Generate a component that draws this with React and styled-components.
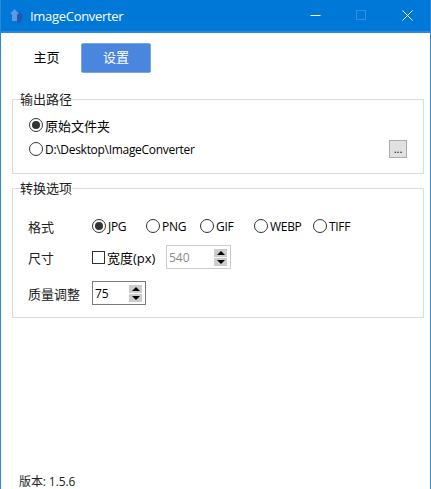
import styled, { createGlobalStyle } from "styled-components";

const GlobalStyle = createGlobalStyle`
  html, body {
    margin: 0;
    padding: 0;
    background: #fff;
  }
  body {
    font-family: "Open Sans", "Noto Sans CJK SC", sans-serif;
    font-size: 12px;
    color: #000;
  }
`;

const AppIcon = () => (
  <svg width="16" height="16" viewBox="0 0 16 16">
    <path d="M5.5 1 L10 6 H8 V13 H3 V6 H1 Z" fill="#5a9be6" />
    <path d="M9.5 2.5 L14 7 L12.6 7.8 L14 9.5 L12.6 11 L13 13 L10.5 15 L8 14.6 V6.5 H10 Z" fill="#2a55ab" />
  </svg>
);

const App = () => {
  return (
    <Window>
      <GlobalStyle />
      <TitleBar>
        <AppIcon />
        <Title>ImageConverter</Title>
        <Controls>
          <Control>
            <svg width="11" height="11" viewBox="0 0 11 11">
              <path d="M0.5 5.5 H10.5" stroke="#fff" strokeWidth="1" />
            </svg>
          </Control>
          <Control>
            <svg width="11" height="11" viewBox="0 0 11 11">
              <rect x="0.5" y="0.5" width="9" height="9" fill="none" stroke="#3391e3" strokeWidth="1" />
            </svg>
          </Control>
          <Control>
            <svg width="11" height="11" viewBox="0 0 11 11">
              <path d="M0.5 0.5 L10.5 10.5 M10.5 0.5 L0.5 10.5" stroke="#fff" strokeWidth="1" />
            </svg>
          </Control>
        </Controls>
      </TitleBar>
      <Content>
        <Tabs>
          <Tab>主页</Tab>
          <Tab $active>设置</Tab>
        </Tabs>
        <Group $height={82}>
          <Legend>输出路径</Legend>
          <PathRow>
            <Radio $checked />
            <OptionText $cjk>原始文件夹</OptionText>
          </PathRow>
          <PathRow>
            <Radio />
            <OptionText>D:\Desktop\ImageConverter</OptionText>
            <BrowseButton>...</BrowseButton>
          </PathRow>
        </Group>
        <Group $height={137} $top={7}>
          <Legend>转换选项</Legend>
          <FormatRow>
            <RowLabel>格式</RowLabel>
            <Option $width={54}>
              <Radio $checked />
              <OptionText>JPG</OptionText>
            </Option>
            <Option $width={54}>
              <Radio />
              <OptionText>PNG</OptionText>
            </Option>
            <Option $width={54}>
              <Radio />
              <OptionText>GIF</OptionText>
            </Option>
            <Option $width={59}>
              <Radio />
              <OptionText>WEBP</OptionText>
            </Option>
            <Option $width={54}>
              <Radio />
              <OptionText>TIFF</OptionText>
            </Option>
          </FormatRow>
          <SizeRow>
            <RowLabel>尺寸</RowLabel>
            <Option $width={74}>
              <Checkbox />
              <OptionText $cjk>宽度(px)</OptionText>
            </Option>
            <Spin $width={65} $disabled>
              <SpinValue $disabled>540</SpinValue>
              <SpinButtons>
                <SpinButton $up />
                <SpinButton />
              </SpinButtons>
            </Spin>
          </SizeRow>
          <QualityRow>
            <RowLabel>质量调整</RowLabel>
            <Spin $width={54}>
              <SpinValue>75</SpinValue>
              <SpinButtons>
                <SpinButton $up />
                <SpinButton />
              </SpinButtons>
            </Spin>
          </QualityRow>
        </Group>
      </Content>
      <Footer>版本: 1.5.6</Footer>
    </Window>
  );
};

const Window = styled.div`
  width: 431px;
  height: 489px;
  box-sizing: border-box;
  border-left: 1px solid #2b88d8;
  border-right: 1px solid #2b88d8;
  display: flex;
  flex-direction: column;
  overflow: hidden;
  background: #fff;
`;

const TitleBar = styled.div`
  height: 33px;
  flex: none;
  margin: 0 -1px;
  padding: 0 1px 0 9px;
  box-sizing: border-box;
  background: #0078d7;
  border-bottom: 2px solid #2b88d8;
  display: flex;
  align-items: center;
`;

const Title = styled.div`
  margin-left: 5px;
  font-size: 13px;
  letter-spacing: -0.3px;
  color: #fff;
`;

const Controls = styled.div`
  margin-left: auto;
  display: flex;
`;

const Control = styled.div`
  width: 46px;
  height: 30px;
  display: flex;
  align-items: center;
  justify-content: center;
`;

const Content = styled.div`
  flex: 1;
  padding: 10px 6px 0 11px;
  display: flex;
  flex-direction: column;
`;

const Tabs = styled.div`
  display: flex;
  height: 30px;
`;

const Tab = styled.div`
  width: 69px;
  padding-bottom: 3px;
  display: flex;
  align-items: center;
  justify-content: center;
  box-sizing: border-box;
  font-family: "Noto Sans CJK SC", sans-serif;
  font-size: 13px;
  border-radius: 2px;
  ${(p) =>
    p.$active
      ? `
    width: 70px;
    background: #4a86dd;
    border: 1px solid #7ba6e8;
    color: #fff;
  `
      : `
    color: #000;
  `}
`;

const Group = styled.fieldset`
  margin: ${(p) => p.$top || 19}px 0 0;
  padding: 0;
  height: ${(p) => p.$height}px;
  box-sizing: border-box;
  border: 1px solid #dcdcdc;
  min-width: 0;
`;

const Legend = styled.legend`
  margin-left: 7px;
  padding: 0;
  font-family: "Noto Sans CJK SC", sans-serif;
  font-size: 13px;
  line-height: 14px;
  color: #222;
`;

const PathRow = styled.div`
  display: flex;
  align-items: center;
  height: 24px;
  padding: 0 16px;

  &:first-of-type {
    margin-top: 7px;
  }
`;

const Radio = styled.span`
  width: 14px;
  height: 14px;
  box-sizing: border-box;
  flex: none;
  border-radius: 50%;
  border: 1px solid #333;
  display: flex;
  align-items: center;
  justify-content: center;

  &::after {
    content: "";
    display: ${(p) => (p.$checked ? "block" : "none")};
    width: 8px;
    height: 8px;
    border-radius: 50%;
    background: #333;
  }
`;

const Checkbox = styled.span`
  width: 13px;
  height: 13px;
  box-sizing: border-box;
  flex: none;
  border: 1px solid #333;
`;

const OptionText = styled.span`
  margin-left: 2px;
  font-family: "Open Sans", "Noto Sans CJK SC", sans-serif;
  font-size: ${(p) => (p.$cjk ? 13 : 12)}px;
  letter-spacing: ${(p) => (p.$cjk ? 0 : -0.3)}px;
  white-space: nowrap;
  color: #000;
`;

const BrowseButton = styled.div`
  margin-left: auto;
  width: 18px;
  height: 18px;
  box-sizing: border-box;
  background: #e1e1e1;
  border: 1px solid #adadad;
  display: flex;
  align-items: center;
  justify-content: center;
  font-size: 11px;
  line-height: 14px;
  color: #000;
`;

const FormatRow = styled.div`
  display: flex;
  align-items: center;
  height: 20px;
  margin-top: 21px;
  padding-left: 15px;
`;

const SizeRow = styled(FormatRow)`
  height: 24px;
  margin-top: 9px;
`;

const QualityRow = styled(FormatRow)`
  height: 24px;
  margin-top: 12px;
`;

const RowLabel = styled.div`
  width: 64px;
  flex: none;
  font-family: "Noto Sans CJK SC", sans-serif;
  font-size: 13px;
  color: #222;
`;

const Option = styled.label`
  width: ${(p) => p.$width}px;
  flex: none;
  display: flex;
  align-items: center;
`;

const Spin = styled.div`
  width: ${(p) => p.$width}px;
  height: 24px;
  box-sizing: border-box;
  border: 1px solid ${(p) => (p.$disabled ? "#cccccc" : "#7a7a7a")};
  display: flex;
  align-items: center;
  justify-content: space-between;
  padding: 0 3px 0 2px;
`;

const SpinValue = styled.span`
  font-size: 12px;
  color: ${(p) => (p.$disabled ? "#8a8a8a" : "#000")};
`;

const SpinButtons = styled.div`
  display: flex;
  flex-direction: column;
  gap: 1px;
`;

const SpinButton = styled.div`
  width: 13px;
  height: 8px;
  background: #cdcdcd;
  display: flex;
  align-items: center;
  justify-content: center;

  &::after {
    content: "";
    width: 0;
    height: 0;
    border-left: 4px solid transparent;
    border-right: 4px solid transparent;
    ${(p) => (p.$up ? "border-bottom: 4px solid #000;" : "border-top: 4px solid #000;")}
  }
`;

const Footer = styled.div`
  flex: none;
  height: 15px;
  padding-left: 18px;
  font-family: "Open Sans", "Noto Sans CJK SC", sans-serif;
  font-size: 12px;
  line-height: 15px;
  letter-spacing: -0.1px;
  color: #222;
`;

export default App;
